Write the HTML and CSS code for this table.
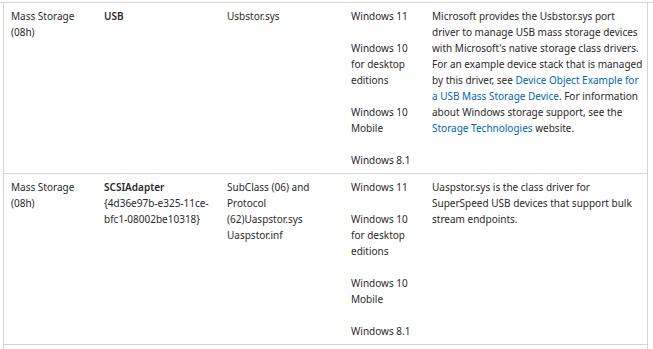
FILE: index.html
```html
<!DOCTYPE html>
<html lang="en">
<head>
<meta charset="utf-8">
<title>USB class drivers</title>
<link rel="stylesheet" href="styles.css">
</head>
<body>
<div class="top-rule"></div>
<div class="table">
  <div class="row">
    <div class="cell"><p>Mass Storage (08h)</p></div>
    <div class="cell"><p><strong>USB</strong></p></div>
    <div class="cell"><p>Usbstor.sys</p></div>
    <div class="cell os">
      <p>Windows 11</p>
      <p>Windows 10 for desktop editions</p>
      <p>Windows 10 Mobile</p>
      <p>Windows 8.1</p>
    </div>
    <div class="cell desc"><p>Microsoft provides the Usbstor.sys port driver to manage USB mass storage devices with Microsoft's native storage class drivers. For an example device stack that is managed by this driver, see <a href="#">Device Object Example for a USB Mass Storage Device</a>. For information about Windows storage support, see the <a href="#">Storage Technologies</a> website.</p></div>
  </div>
  <div class="row">
    <div class="cell"><p>Mass Storage (08h)</p></div>
    <div class="cell"><p><strong>SCSIAdapter</strong><br>{4d36e97b-e325-11ce-bfc1-08002be10318}</p></div>
    <div class="cell"><p>SubClass (06) and Protocol (62)Uaspstor.sys<br>Uaspstor.inf</p></div>
    <div class="cell os">
      <p>Windows 11</p>
      <p>Windows 10 for desktop editions</p>
      <p>Windows 10 Mobile</p>
      <p>Windows 8.1</p>
    </div>
    <div class="cell desc"><p>Uaspstor.sys is the class driver for SuperSpeed USB devices that support bulk stream endpoints.</p></div>
  </div>
</div>
</body>
</html>
```
FILE: styles.css
```css
html, body {
  margin: 0;
  padding: 0;
  background: #ffffff;
}
body {
  font-family: "Noto Sans", "Segoe UI", "Open Sans", sans-serif;
  font-size: 10px;
  line-height: 16px;
  color: #2a2a2a;
  width: 653px;
  height: 349px;
  overflow: hidden;
}
.top-rule {
  margin-top: 2px;
  height: 1px;
  background: #d4d4d4;
}
.table {
  margin-left: 3px;
  width: 643px;
  height: 346px;
  border-left: 1px solid #d4d4d4;
  border-right: 1px solid #d4d4d4;
}
.row {
  display: grid;
  grid-template-columns: 93px 123px 124px 81px 1fr;
  border-bottom: 1px solid #d4d4d4;
}
.cell {
  padding: 5px 4px 5px 7px;
}
.cell p {
  margin: 0;
}
.os p + p {
  margin-top: 16px;
}
.desc {
  padding-right: 3px;
}
strong {
  font-weight: 600;
}
a {
  color: #0065b3;
  text-decoration: none;
}
```
